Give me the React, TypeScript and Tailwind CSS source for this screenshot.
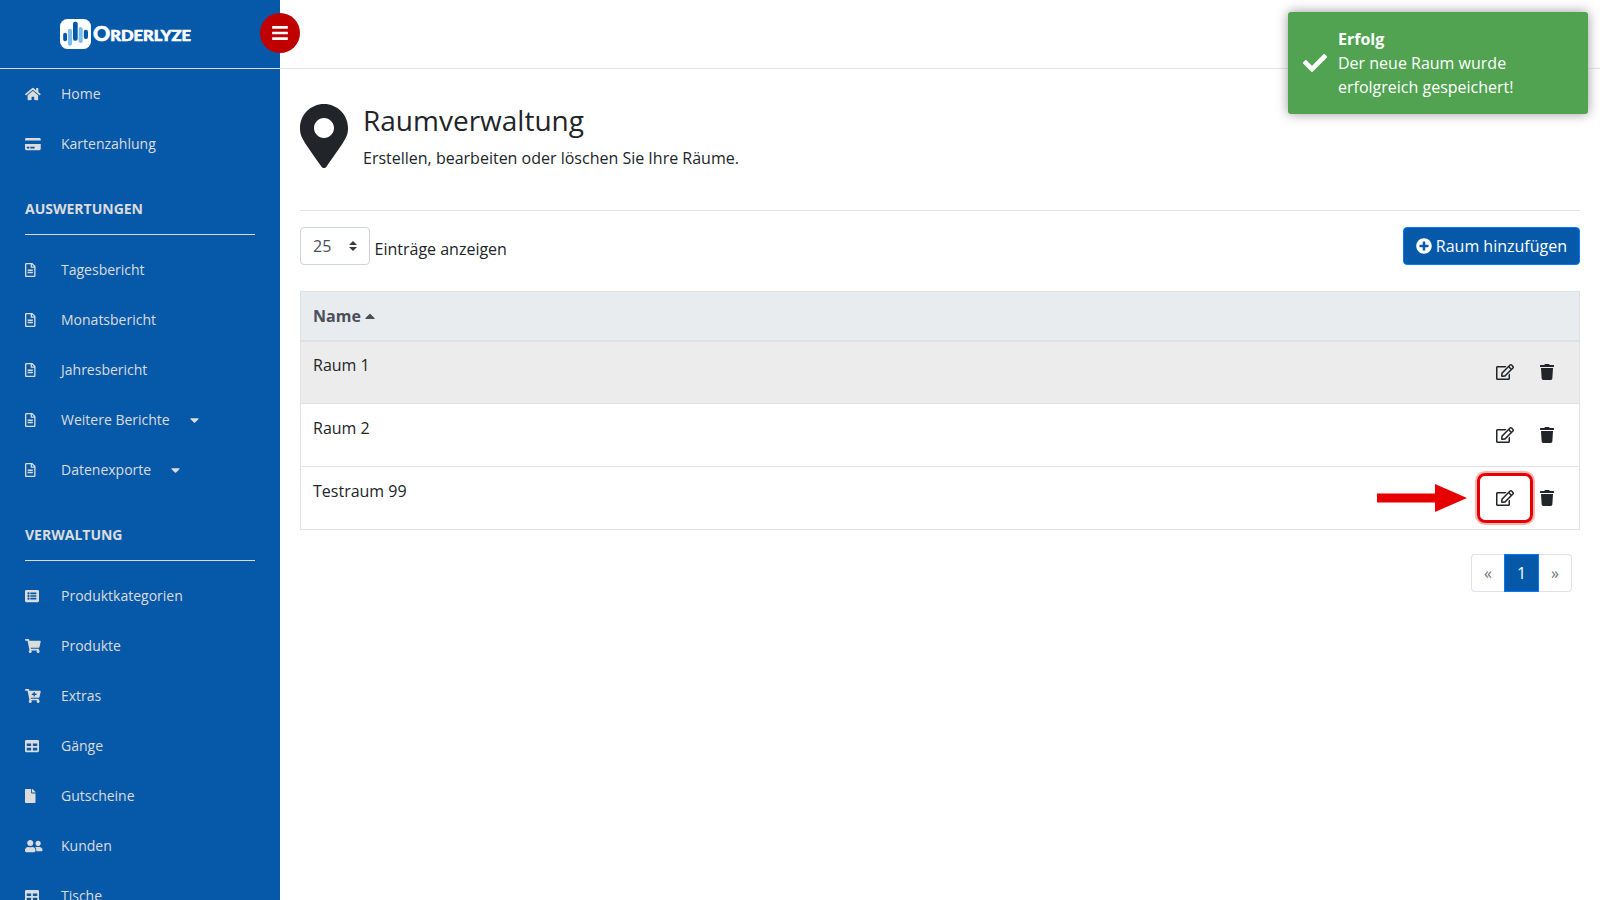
import type { IconType } from "react-icons";
import {
  FaBars,
  FaCaretDown,
  FaCaretUp,
  FaCartPlus,
  FaCheck,
  FaCreditCard,
  FaFile,
  FaHome,
  FaListAlt,
  FaMapMarkerAlt,
  FaPlusCircle,
  FaRegEdit,
  FaRegFileAlt,
  FaShoppingCart,
  FaTable,
  FaTrash,
  FaUserFriends,
} from "react-icons/fa";

type NavItem = {
  title: string;
  icon: IconType;
  iconWidth: string;
  dropdown?: boolean;
};

const mainNav: NavItem[] = [
  { title: "Home", icon: FaHome, iconWidth: "w-[15.75px]" },
  { title: "Kartenzahlung", icon: FaCreditCard, iconWidth: "w-[15.75px]" },
];

const reportNav: NavItem[] = [
  { title: "Tagesbericht", icon: FaRegFileAlt, iconWidth: "w-[10.5px]" },
  { title: "Monatsbericht", icon: FaRegFileAlt, iconWidth: "w-[10.5px]" },
  { title: "Jahresbericht", icon: FaRegFileAlt, iconWidth: "w-[10.5px]" },
  {
    title: "Weitere Berichte",
    icon: FaRegFileAlt,
    iconWidth: "w-[10.5px]",
    dropdown: true,
  },
  {
    title: "Datenexporte",
    icon: FaRegFileAlt,
    iconWidth: "w-[10.5px]",
    dropdown: true,
  },
];

const adminNav: NavItem[] = [
  { title: "Produktkategorien", icon: FaListAlt, iconWidth: "w-[14px]" },
  { title: "Produkte", icon: FaShoppingCart, iconWidth: "w-[15.75px]" },
  { title: "Extras", icon: FaCartPlus, iconWidth: "w-[15.75px]" },
  { title: "Gänge", icon: FaTable, iconWidth: "w-[14px]" },
  { title: "Gutscheine", icon: FaFile, iconWidth: "w-[10.5px]" },
  { title: "Kunden", icon: FaUserFriends, iconWidth: "w-[17.5px]" },
  { title: "Tische", icon: FaTable, iconWidth: "w-[14px]" },
];

const rooms = [
  { id: 1, name: "Raum 1", rowClass: "h-[62px] pt-[11px] border-b bg-[#ececec]" },
  { id: 2, name: "Raum 2", rowClass: "h-[63px] pt-3 border-b" },
  { id: 3, name: "Testraum 99", rowClass: "h-[62px] pt-3", marked: true },
];

const App = () => {
  return (
    <div className="relative flex h-[900px] w-[1600px] overflow-hidden bg-white font-['Open_Sans',sans-serif] text-base text-[#212529]">
      <Sidebar />
      <div className="flex-1">
        <header className="h-[69px] border-b border-[#ebdfdf]" />
        <main className="px-5">
          <PageHeading />
          <Toolbar />
          <RoomTable />
          <Pagination />
        </main>
      </div>
      <button className="absolute left-[260px] top-[13px] flex size-10 items-center justify-center rounded-full bg-[#c00000] text-white">
        <FaBars className="size-[18px]" />
      </button>
      <Toast />
    </div>
  );
};

export default App;

const Logo = () => {
  return (
    <div className="flex h-[68px] items-center pl-[60px]">
      <svg width="31" height="30" viewBox="0 0 31 30" className="shrink-0">
        <rect width="31" height="30" rx="7.5" fill="#fff" />
        <rect x="3.2" y="13.7" width="3.8" height="8.5" rx="1.9" fill="#0659a9" />
        <rect x="8" y="9.7" width="4" height="17" rx="1.8" fill="#7dbdeb" />
        <rect x="13" y="2.7" width="4.7" height="19" rx="2" fill="#0659a9" />
        <rect x="18.7" y="8" width="4" height="16" rx="1.8" fill="#7dbdeb" />
        <rect x="23.8" y="10.7" width="4.2" height="9.3" rx="2" fill="#0659a9" />
      </svg>
      <svg width="102" height="30" className="ml-0.5 shrink-0">
        <text
          y="22"
          fill="#fff"
          stroke="#fff"
          strokeWidth="0.6"
          fontFamily="Lato, sans-serif"
          fontWeight="900"
          fontSize="20"
          textLength="98"
          lengthAdjust="spacingAndGlyphs"
        >
          O<tspan fontSize="15.5">RDERLYZE</tspan>
        </text>
      </svg>
    </div>
  );
};

const Sidebar = () => {
  return (
    <aside className="h-full w-[280px] shrink-0 overflow-hidden bg-[#0659a9] text-sm text-[#dcdcdc]">
      <div className="h-[69px] border-b border-[#dcdcdc]">
        <Logo />
      </div>
      <NavList items={mainNav} />
      <NavTitle title="Auswertungen" />
      <NavList items={reportNav} />
      <NavTitle title="Verwaltung" />
      <NavList items={adminNav} />
    </aside>
  );
};

const NavTitle = ({ title }: { title: string }) => {
  return (
    <div className="mx-[25px] mb-[10px] h-[66px] border-b border-[#dcdcdc] pt-[29px] font-bold uppercase leading-[21px]">
      {title}
    </div>
  );
};

const NavList = ({ items }: { items: NavItem[] }) => {
  return (
    <ul>
      {items.map((item) => (
        <li key={item.title} className="flex h-[50px] items-center pl-[25px]">
          <span className="w-9 shrink-0">
            <item.icon className={`h-[14px] ${item.iconWidth}`} />
          </span>
          <span className="pb-0.5 leading-[21px]">{item.title}</span>
          {item.dropdown && <FaCaretDown className="ml-5 h-[14px] w-[9px]" />}
        </li>
      ))}
    </ul>
  );
};

const PageHeading = () => {
  return (
    <div className="flex h-[142px] border-b border-[#e5e5e5] pt-[35px]">
      <FaMapMarkerAlt className="h-16 w-12" />
      <div className="ml-[15px]">
        <h1 className="text-[28px] leading-8">Raumverwaltung</h1>
        <p className="mt-[10px] leading-6">
          Erstellen, bearbeiten oder löschen Sie Ihre Räume.
        </p>
      </div>
    </div>
  );
};

const Toolbar = () => {
  return (
    <div className="mt-4 flex items-start justify-between">
      <div className="flex">
        <div className="flex h-[38px] w-[70px] items-center justify-between rounded border border-[#ced4da] px-3 text-[#495057]">
          <span>25</span>
          <svg width="8" height="10" viewBox="0 0 4 5" fill="#343a40">
            <path d="M2 0L0 2h4zm0 5L0 3h4z" />
          </svg>
        </div>
        <span className="ml-[4.5px] mt-[10px] leading-6">
          Einträge anzeigen
        </span>
      </div>
      <button className="flex h-[38px] items-center rounded border border-[#007bff] bg-[#0659a9] px-3 text-white">
        <FaPlusCircle className="mr-[4.16px] size-4" />
        Raum hinzufügen
      </button>
    </div>
  );
};

const RoomTable = () => {
  return (
    <div className="mt-[26px] border border-[#dee2e6]">
      <div className="flex h-[50px] items-center border-b-2 border-[#dee2e6] bg-[#e9ecef] pl-3 font-bold text-[#495057]">
        Name
        <FaCaretUp className="ml-1 h-4 w-[10px]" />
      </div>
      {rooms.map((room) => (
        <div
          key={room.id}
          className={`flex justify-between border-[#dee2e6] pl-3 ${room.rowClass}`}
        >
          <span className="leading-6">{room.name}</span>
          <div className="relative mr-[25px] mt-[11px] flex h-4 items-center">
            <FaRegEdit className="h-4 w-[18px]" />
            <FaTrash className="ml-[26px] h-4 w-[14px]" />
            {room.marked && <EditMarker />}
          </div>
        </div>
      ))}
    </div>
  );
};

// Red arrow and frame that point at the edit button
const EditMarker = () => {
  return (
    <>
      <svg
        width="92"
        height="30"
        viewBox="0 0 92 30"
        fill="#e60000"
        className="absolute -left-[119px] -top-[7px]"
      >
        <path d="M0 10.5h58V1l32 14-32 14v-9.5H0z" />
      </svg>
      <div className="absolute -left-[19px] -top-[17px] h-[50px] w-14 rounded-lg border-3 border-[#e60000] shadow-[0_0_0_2px_#f5b5b5]" />
    </>
  );
};

const Pagination = () => {
  return (
    <div className="mr-2 mt-6 flex h-[38px] justify-end leading-5">
      <span className="flex w-[33px] items-center justify-center rounded-l border border-r-0 border-[#dee2e6] text-[#6c757d]">
        «
      </span>
      <span className="flex w-[35px] items-center justify-center border border-[#007bff] bg-[#0659a9] text-white">
        1
      </span>
      <span className="flex w-[33px] items-center justify-center rounded-r border border-l-0 border-[#dee2e6] text-[#6c757d]">
        »
      </span>
    </div>
  );
};

const Toast = () => {
  return (
    <div className="absolute left-[1288px] top-3 flex h-[102px] w-[300px] items-center rounded-[3px] bg-[#51a351] pl-[15px] text-white shadow-[0_0_12px_#999999]">
      <FaCheck className="size-6" />
      <div className="ml-[11px] w-[220px] leading-6">
        <div className="font-bold">Erfolg</div>
        <div>Der neue Raum wurde erfolgreich gespeichert!</div>
      </div>
    </div>
  );
};
